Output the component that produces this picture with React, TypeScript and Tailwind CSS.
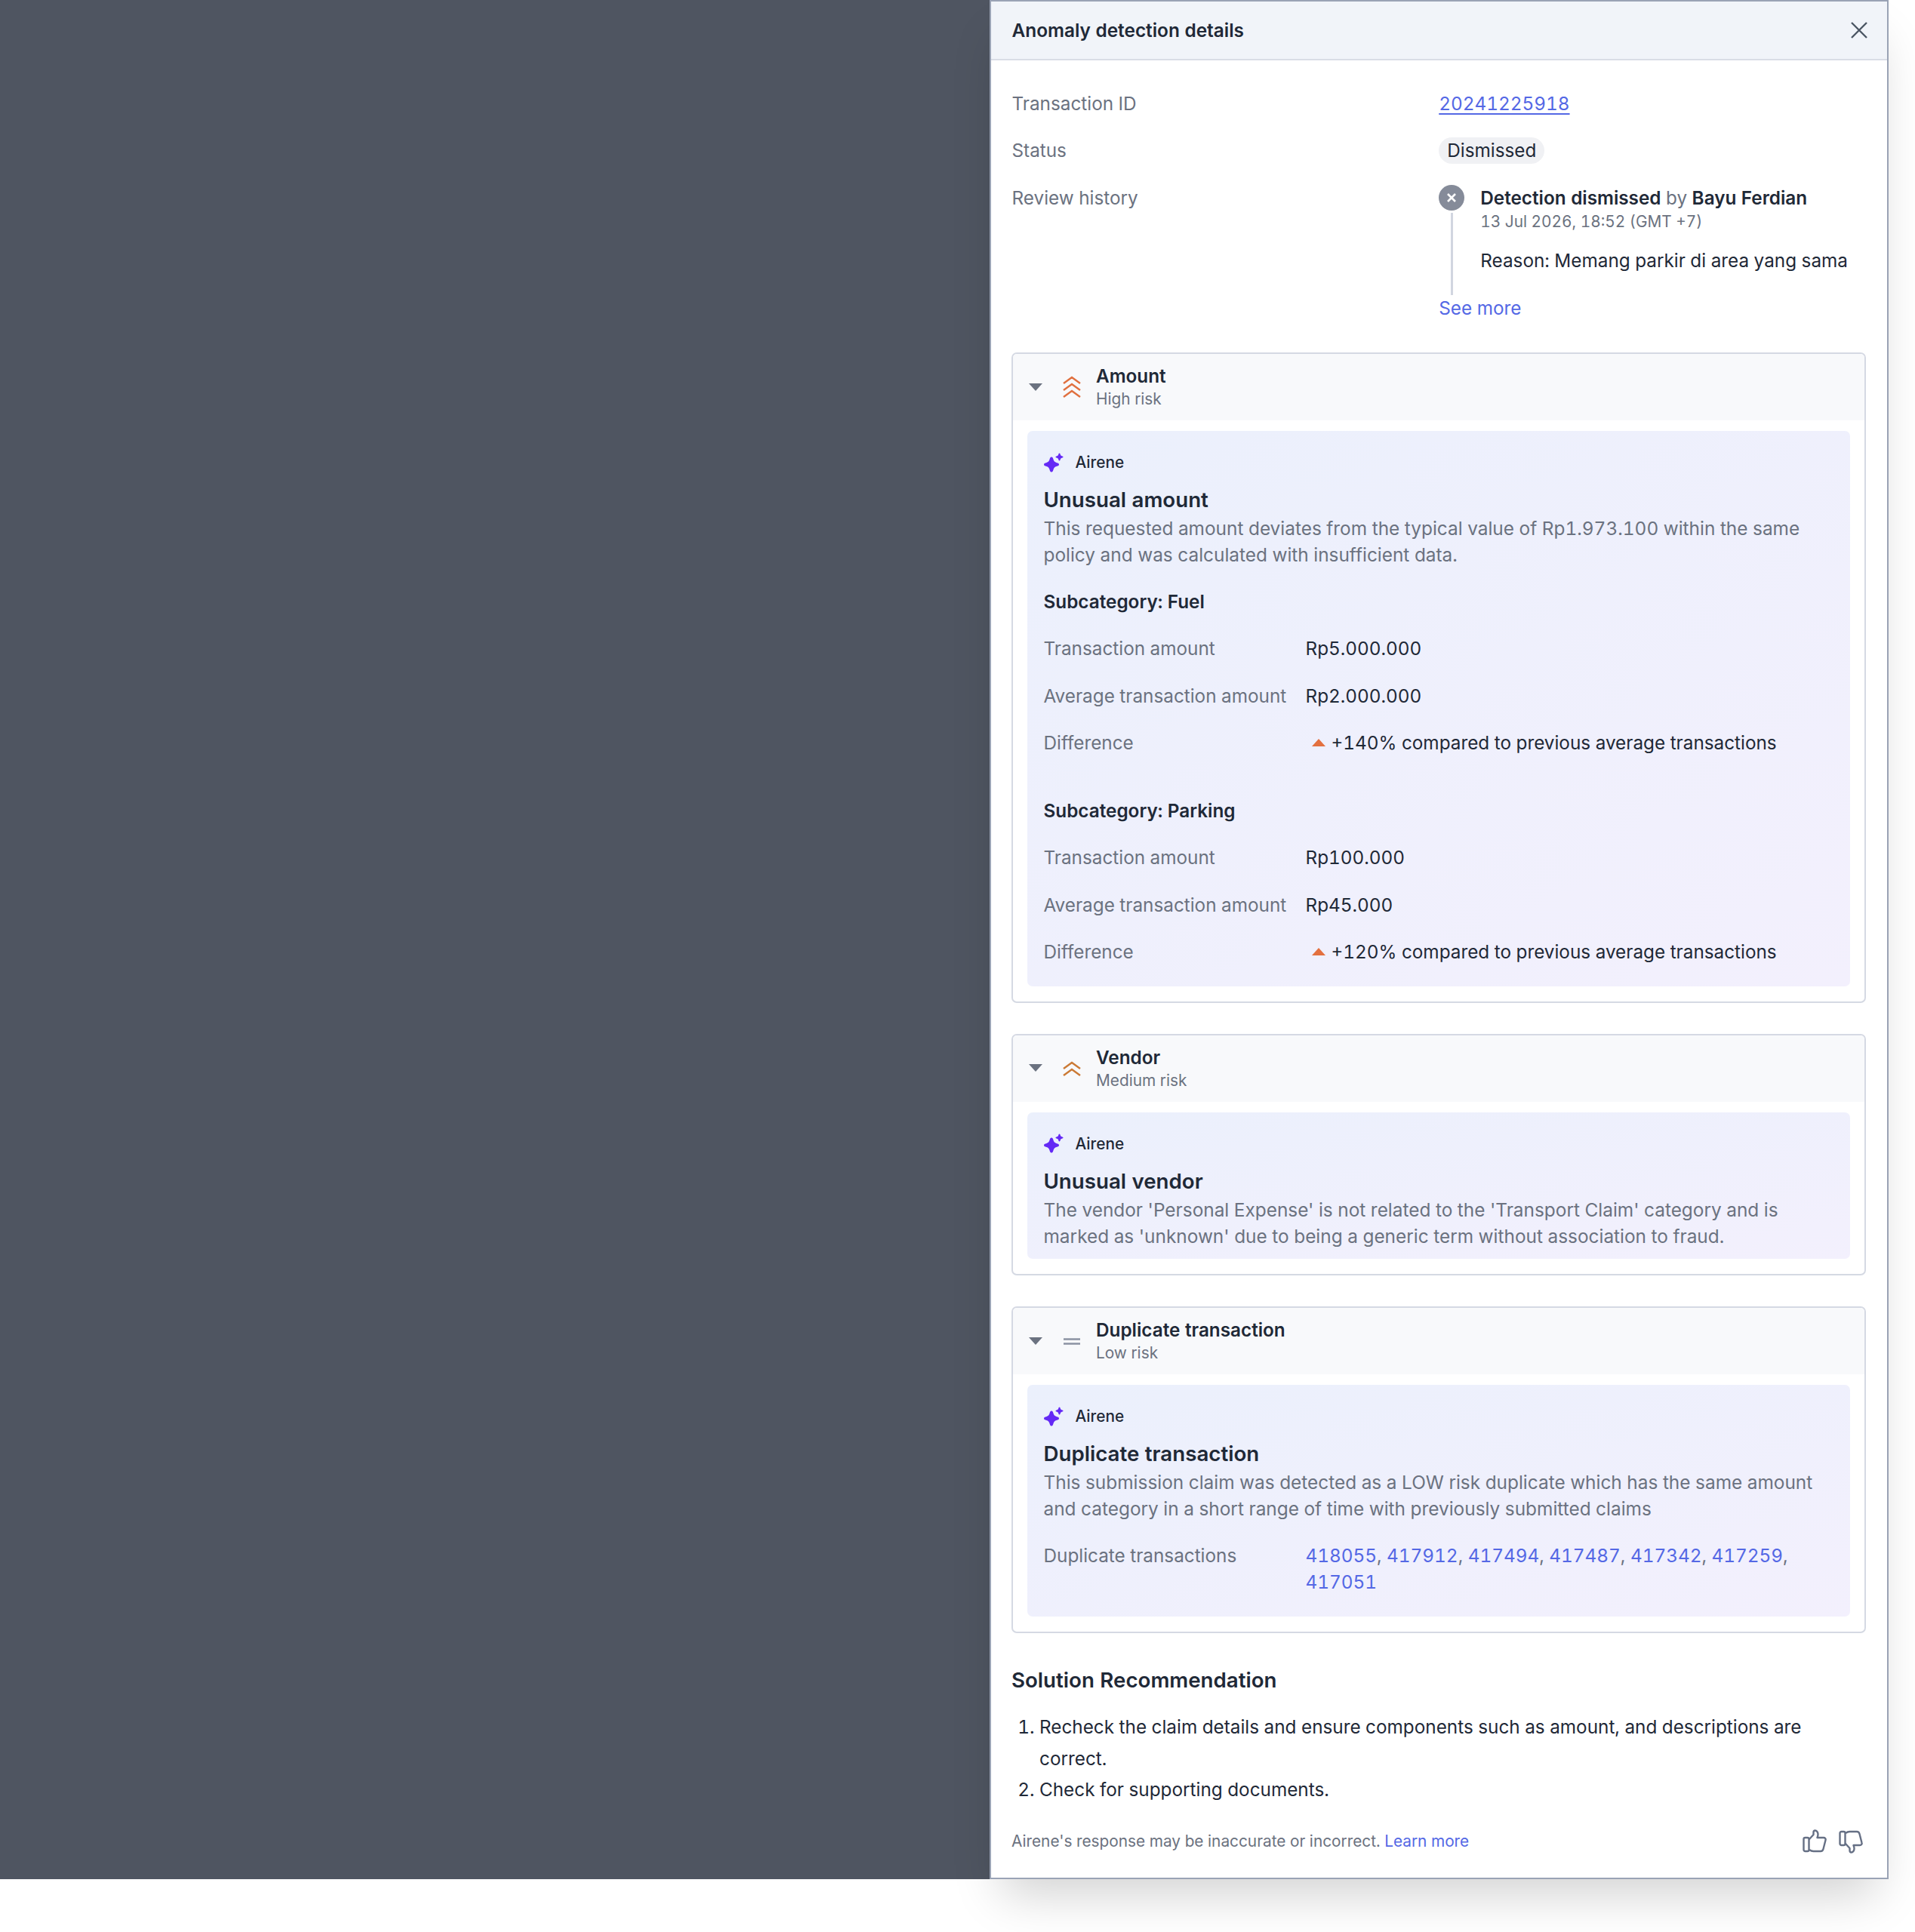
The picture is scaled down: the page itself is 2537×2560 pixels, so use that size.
import React from "react";

const font = { fontFamily: "Inter, sans-serif" };

const star =
  "M10 0c1.6 0 2 1.5 2.5 3.3.6 2.2 1.9 3.6 4 4.2 1.8.5 3.5.9 3.5 2.5s-1.7 2-3.5 2.5c-2.1.6-3.4 2-4 4.2-.5 1.8-.9 3.3-2.5 3.3s-2-1.5-2.5-3.3c-.6-2.2-1.9-3.6-4-4.2C1.7 12 0 11.6 0 10s1.7-2 3.5-2.5c2.1-.6 3.4-2 4-4.2C8 1.5 8.4 0 10 0z";

function Sparkle() {
  return (
    <svg width="26" height="26" viewBox="0 0 26 26" className="shrink-0" fill="#6429f5">
      <g transform="translate(0 5.5)">
        <path d={star} />
      </g>
      <g transform="translate(15.5 0.5) scale(0.5)">
        <path d={star} />
      </g>
    </svg>
  );
}

function RiskIcon({ level }: { level: "high" | "medium" | "low" }) {
  if (level === "low") {
    return (
      <svg width="26" height="26" viewBox="0 0 26 26" className="shrink-0">
        <path d="M2 10.5h22M2 16.5h22" stroke="#8b93a3" strokeWidth="2.4" />
      </svg>
    );
  }
  if (level === "medium") {
    return (
      <svg width="26" height="26" viewBox="0 0 26 26" fill="none" className="shrink-0">
        <path d="M2 13l11-8 11 8M2 22l11-8 11 8" stroke="#cb7a35" strokeWidth="2.4" />
      </svg>
    );
  }
  return (
    <svg width="26" height="32" viewBox="0 0 26 32" fill="none" className="shrink-0">
      <path d="M2 11l11-8 11 8M2 20l11-8 11 8M2 29l11-8 11 8" stroke="#e0703f" strokeWidth="2.4" />
    </svg>
  );
}

function Caret() {
  return (
    <svg width="18" height="11" viewBox="0 0 18 11" className="shrink-0">
      <path d="M0 0h18l-9 10z" fill="#6b7280" />
    </svg>
  );
}

function DiffRow({ value }: { value: string }) {
  return (
    <Row label="Difference">
      <span className="flex items-center">
        <svg width="18" height="10" viewBox="0 0 18 10" className="mx-[8px] shrink-0">
          <path d="M9 0l9 10H0z" fill="#e3703f" />
        </svg>
        {value}
      </span>
    </Row>
  );
}

function Row({ label, children }: { label: string; children: React.ReactNode }) {
  return (
    <div className="mt-[27.6px] flex text-[24.3px] leading-[34.8px]">
      <div className="w-[347px] shrink-0 text-[#6b7280]">{label}</div>
      <div className="text-[#1f2937]">{children}</div>
    </div>
  );
}

function RiskCard({
  title,
  risk,
  level,
  heading,
  description,
  children,
}: {
  title: string;
  risk: string;
  level: "high" | "medium" | "low";
  heading: string;
  description: string;
  children?: React.ReactNode;
}) {
  return (
    <div className="mb-[41px] overflow-hidden rounded-[7px] border-2 border-[#d5d9e3]">
      <div className="flex h-[88px] items-center bg-[#f8f9fb] pl-[21px]">
        <Caret />
        <div className="ml-[25px] mr-[18px] flex w-[28px] justify-center">
          <RiskIcon level={level} />
        </div>
        <div className="pt-[1px]">
          <div className="text-[24.3px] font-semibold leading-[30px] text-[#1f2937]">{title}</div>
          <div className="mt-[1px] text-[20.8px] leading-[30px] text-[#6b7280]">{risk}</div>
        </div>
      </div>
      <div className="px-[19px] pb-[20px] pt-[14px]">
        <div className={`rounded-[7px] bg-gradient-to-br from-[#ebf0fc] to-[#f3f0fd] pl-[21.5px] pr-[22px] pt-[28px] ${children ? "pb-[28px]" : "pb-[13px]"}`}>
          <div className="flex h-[27px] items-center gap-[16px]">
            <Sparkle />
            <span className="text-[20.8px] font-medium text-[#1f2937]">Airene</span>
          </div>
          <div className="mt-[15px] text-[27.7px] font-semibold leading-[42px] text-[#1f2937]">{heading}</div>
          <div className="text-[24.4px] leading-[34.8px] text-[#6b7280]">{description}</div>
          {children}
        </div>
      </div>
    </div>
  );
}

export default function App() {
  return (
    <div className="bg-white pb-[72px] tabular-nums" style={font}>
      <div className="flex pr-[35px]">
        <div className="flex-1 bg-[#4f5561]" />
        <div className="w-[1191px] border-2 border-[#9aa3b5] bg-white shadow-[0_36px_60px_-16px_rgba(0,0,0,0.18)]">
          {/* Header */}
          <div className="flex h-[78px] items-center justify-between border-b-2 border-[#d9dde6] bg-[#f1f4f9] pl-[27.5px] pr-[25px]">
            <span className="text-[24.4px] font-semibold text-[#1f2937]">Anomaly detection details</span>
            <svg width="24" height="24" viewBox="0 0 24 24" fill="none">
              <path d="M2 2l20 20M22 2L2 22" stroke="#4b5563" strokeWidth="2.4" />
            </svg>
          </div>

          <div className="pb-[32px] pl-[27px] pr-[28px] pt-[40px]">
            {/* Summary */}
            <div className="mb-[41px] pl-[0.5px] text-[24.3px] leading-[34.8px]">
              <div className="grid grid-cols-2 text-[#6b7280]">
                <div>Transaction ID</div>
                <div className="font-normal text-[#5468e5] underline underline-offset-[4px]">20241225918</div>
              </div>
              <div className="mt-[27.6px] grid grid-cols-2 text-[#6b7280]">
                <div>Status</div>
                <div>
                  <span className="inline-block rounded-full bg-[#f0f1f4] px-[11px] text-[#1f2937]">Dismissed</span>
                </div>
              </div>
              <div className="mt-[27.6px] grid grid-cols-2 text-[#6b7280]">
                <div>Review history</div>
                <div>
                  <div className="flex gap-[21px]">
                    <div className="flex w-[34px] shrink-0 flex-col items-center">
                      <div className="flex size-[34px] items-center justify-center rounded-full bg-[#858b99]">
                        <svg width="14" height="14" viewBox="0 0 14 14" fill="none">
                          <path d="M2 2l10 10M12 2L2 12" stroke="#fff" strokeWidth="2.6" />
                        </svg>
                      </div>
                      <div className="mt-[3px] w-[3px] flex-1 bg-[#d1d6e0]" />
                    </div>
                    <div className="pb-[29px]">
                      <div className="text-[#1f2937]">
                        <span className="font-semibold">Detection dismissed</span>{" "}
                        <span className="text-[#6b7280]">by</span>{" "}
                        <span className="font-semibold">Bayu Ferdian</span>
                      </div>
                      <div className="text-[20.8px] leading-[27px] text-[#6b7280]">13 Jul 2026, 18:52 (GMT +7)</div>
                      <div className="mt-[21px] text-[#1f2937]">Reason: Memang parkir di area yang sama</div>
                    </div>
                  </div>
                  <div className="text-[#5468e5]">See more</div>
                </div>
              </div>
            </div>

            <RiskCard
              title="Amount"
              risk="High risk"
              level="high"
              heading="Unusual amount"
              description="This requested amount deviates from the typical value of Rp1.973.100 within the same policy and was calculated with insufficient data."
            >
              <div className="mt-[27px] text-[24.3px] font-semibold leading-[34.8px] text-[#1f2937]">Subcategory: Fuel</div>
              <Row label="Transaction amount">Rp5.000.000</Row>
              <Row label="Average transaction amount">Rp2.000.000</Row>
              <DiffRow value="+140% compared to previous average transactions" />
              <div className="mt-[55px] text-[24.3px] font-semibold leading-[34.8px] text-[#1f2937]">Subcategory: Parking</div>
              <Row label="Transaction amount">Rp100.000</Row>
              <Row label="Average transaction amount">Rp45.000</Row>
              <DiffRow value="+120% compared to previous average transactions" />
            </RiskCard>

            <RiskCard
              title="Vendor"
              risk="Medium risk"
              level="medium"
              heading="Unusual vendor"
              description="The vendor 'Personal Expense' is not related to the 'Transport Claim' category and is marked as 'unknown' due to being a generic term without association to fraud."
            />

            <RiskCard
              title="Duplicate transaction"
              risk="Low risk"
              level="low"
              heading="Duplicate transaction"
              description="This submission claim was detected as a LOW risk duplicate which has the same amount and category in a short range of time with previously submitted claims"
            >
              <Row label="Duplicate transactions">
                <span className="block max-w-[660px] text-[#6b7280]">
                  <span className="text-[#5468e5]">418055</span>, <span className="text-[#5468e5]">417912</span>,{" "}
                  <span className="text-[#5468e5]">417494</span>, <span className="text-[#5468e5]">417487</span>,{" "}
                  <span className="text-[#5468e5]">417342</span>, <span className="text-[#5468e5]">417259</span>,{" "}
                  <span className="text-[#5468e5]">417051</span>
                </span>
              </Row>
            </RiskCard>

            {/* Recommendation */}
            <div className="text-[27.7px] font-semibold leading-[42px] text-[#1f2937]">Solution Recommendation</div>
            <ol className="mt-[21px] list-decimal pl-[37px] text-[24.3px] leading-[41.6px] text-[#1f2937]">
              <li>Recheck the claim details and ensure components such as amount, and descriptions are correct.</li>
              <li>Check for supporting documents.</li>
            </ol>

            {/* Footer */}
            <div className="mt-[31px] flex items-center justify-between">
              <span className="text-[20.8px] text-[#6b7280]">
                Airene's response may be inaccurate or incorrect. <span className="text-[#5468e5]">Learn more</span>
              </span>
              <div className="flex items-center gap-[16px] pr-[4px]">
                <svg width="32" height="32" viewBox="0 0 32 32" fill="none" stroke="#667085" strokeWidth="2.4" strokeLinejoin="round">
                  <rect x="1.5" y="11" width="7" height="18" rx="2" />
                  <path d="M8.5 13.5l6-6.5V4c0-1.5 1-2.5 2.2-2.5 2 0 3.8 2.3 3.8 5 0 1.5-.4 3-1 4.5h8.5c1.8 0 3 1.5 2.5 3.2l-3 11.8c-.4 1.6-1.5 3-3.5 3h-9.5c-2 0-3.6-.6-5.5-2" />
                </svg>
                <svg width="32" height="32" viewBox="0 0 32 32" fill="none" stroke="#667085" strokeWidth="2.4" strokeLinejoin="round">
                  <rect x="1.5" y="3" width="7" height="18" rx="2" />
                  <path d="M8.5 18.5l6 6.5v3c0 1.5 1 2.5 2.2 2.5 2 0 3.8-2.3 3.8-5 0-1.5-.4-3-1-4.5h8.5c1.8 0 3-1.5 2.5-3.2l-3-11.8c-.4-1.6-1.5-3-3.5-3h-9.5c-2 0-3.6.6-5.5 2" />
                </svg>
              </div>
            </div>
          </div>
        </div>
      </div>
    </div>
  );
}
